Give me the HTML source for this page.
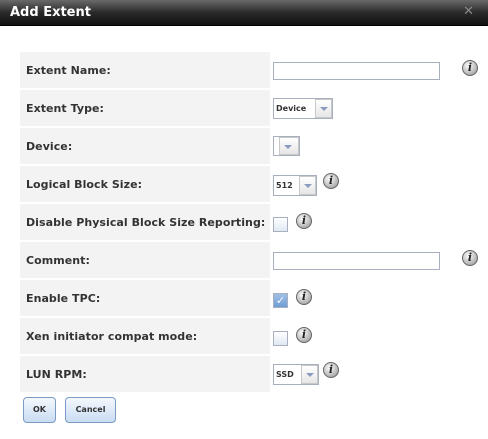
<!DOCTYPE html>
<html><head><style>
*{margin:0;padding:0;box-sizing:border-box}
body{width:488px;height:439px;background:#fff;position:relative;overflow:hidden;font-family:"DejaVu Sans","Liberation Sans",sans-serif}
.title{position:absolute;left:0;top:0;width:488px;height:26px;background:linear-gradient(#6a6a6a,#2a2a2a 50%,#111);border-bottom:1px solid #000}
.title span{position:absolute;left:10px;top:5px;color:#fff;font-weight:bold;font-size:13px}
.title i{position:absolute;right:14px;top:4px;color:#888;font-style:normal;font-size:13px;font-weight:bold}
.row{position:absolute;left:20px;width:250px;height:36px;background:#f3f3f3}
.row span{position:absolute;left:6px;top:12px;font-size:11px;font-weight:bold;color:#333;letter-spacing:0.05px}
.txt{position:absolute;left:273px;width:167px;height:18px;border:1px solid #a8b0bf;background:#fff}
.sel{position:absolute;left:273px;height:21px;border:1px solid #a8b0bf;background:#fff;font-size:8px;font-weight:bold;color:#333;padding:5px 0 0 2px}
.sel b{position:absolute;right:0;top:0;width:17px;height:19px;background:linear-gradient(#fff,#e6e6e6);border:1px solid #c8c8c8}
.sel b:after{content:"";position:absolute;left:4px;top:7px;border-left:4px solid transparent;border-right:4px solid transparent;border-top:4px solid #8a9bc0}
.cb{position:absolute;left:273px;width:15px;height:15px;border:1px solid #a8b0bf;background:linear-gradient(#fff,#dfe8f3)}
.info{position:absolute;width:16px;height:16px;border-radius:50%;background:radial-gradient(circle at 40% 35%,#fff,#bbb 60%,#888);border:1px solid #666;font:italic bold 11px "DejaVu Serif",serif;color:#222;text-align:center;line-height:14px}
.btn{position:absolute;top:397px;height:26px;border:1px solid #7a9cc4;border-radius:4px;background:linear-gradient(#f4f8fd,#c9dcf2);font-size:8px;font-weight:bold;color:#333;text-align:center;line-height:24px}
</style></head><body>
<div class="title"><span>Add Extent</span><i>✕</i></div>

<div class="row" style="top:52px"><span>Extent Name:</span></div>
<div class="txt" style="top:62px"></div>
<div class="info" style="left:462px;top:60px">i</div>

<div class="row" style="top:90px"><span>Extent Type:</span></div>
<div class="sel" style="top:98px;width:60px">Device<b></b></div>

<div class="row" style="top:128px"><span>Device:</span></div>
<div class="sel" style="top:136px;width:27px;height:20px"><b style="width:20px;height:18px"></b></div>

<div class="row" style="top:166px"><span>Logical Block Size:</span></div>
<div class="sel" style="top:175px;width:44px">512<b></b></div>
<div class="info" style="left:323px;top:173px">i</div>

<div class="row" style="top:204px"><span>Disable Physical Block Size Reporting:</span></div>
<div class="cb" style="top:217px"></div>
<div class="info" style="left:296px;top:213px">i</div>

<div class="row" style="top:242px"><span>Comment:</span></div>
<div class="txt" style="top:252px"></div>
<div class="info" style="left:462px;top:250px">i</div>

<div class="row" style="top:280px"><span>Enable TPC:</span></div>
<div class="cb" style="top:293px;background:linear-gradient(#9fc0e6,#6f9dd4);color:#fff;font-size:11px;line-height:13px;text-align:center;font-weight:bold">✓</div>
<div class="info" style="left:296px;top:289px">i</div>

<div class="row" style="top:318px"><span>Xen initiator compat mode:</span></div>
<div class="cb" style="top:331px"></div>
<div class="info" style="left:296px;top:327px">i</div>

<div class="row" style="top:356px"><span>LUN RPM:</span></div>
<div class="sel" style="top:364px;width:46px">SSD<b></b></div>
<div class="info" style="left:323px;top:362px">i</div>

<div class="btn" style="left:23px;width:33px">OK</div>
<div class="btn" style="left:65px;width:51px">Cancel</div>
</body></html>
